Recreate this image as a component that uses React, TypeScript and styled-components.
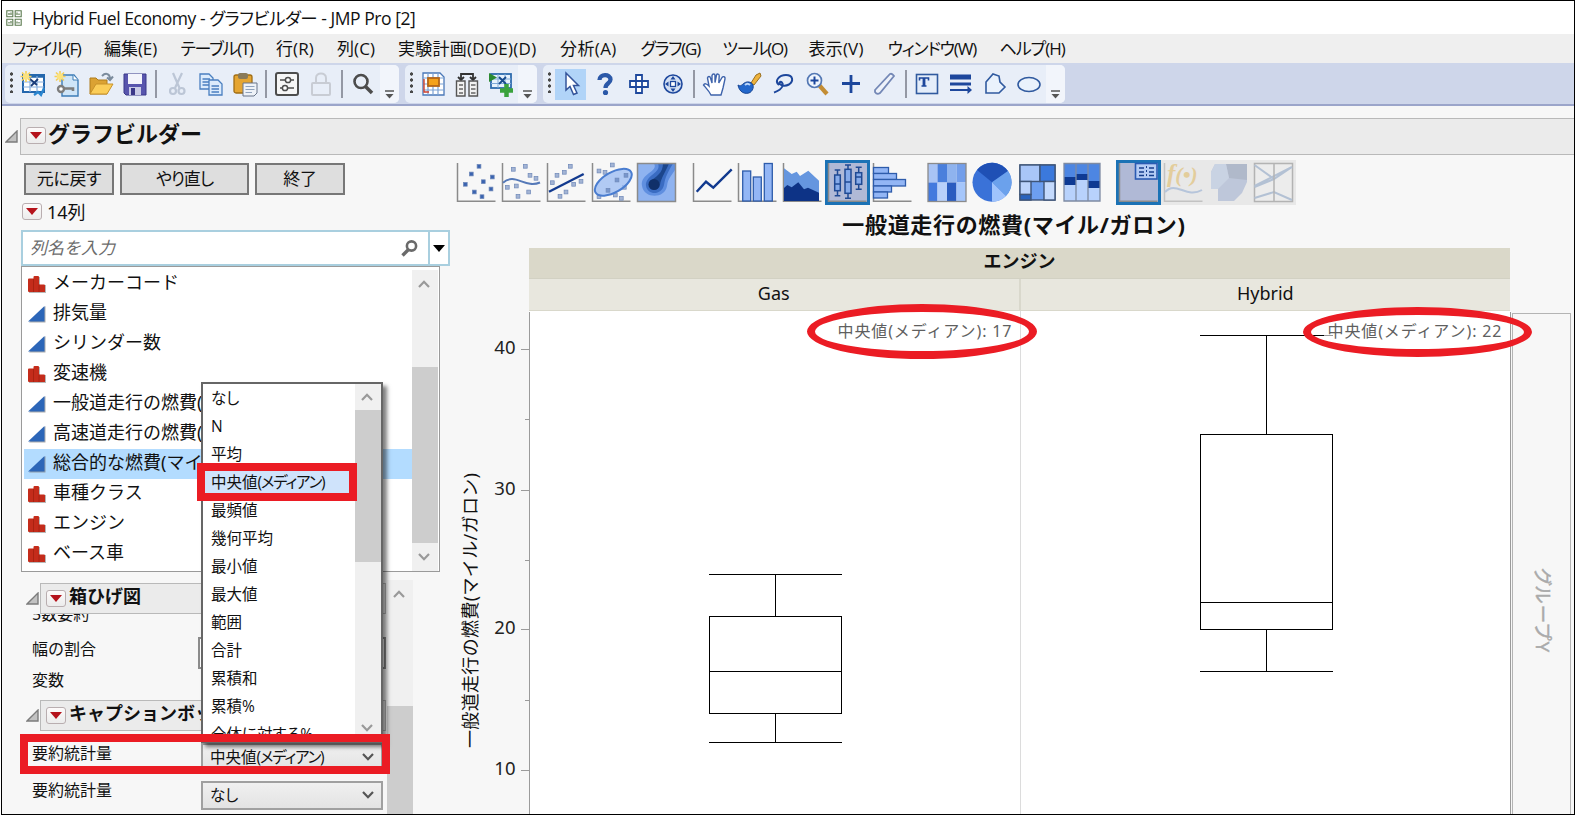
import React from "react";
import styled, { createGlobalStyle, css } from "styled-components";

const jp = `"Noto Sans", "Noto Sans CJK JP", sans-serif`;
const ui = `"Open Sans", "Noto Sans CJK JP", sans-serif`;
const RED = "#eb1c24";

const GlobalStyle = createGlobalStyle`
  * { box-sizing: border-box; }
  body { margin: 0; background: #fff; color: #111; font-family: ${jp}; overflow: hidden; }
  svg { display: block; flex: none; }
`;

const Page = styled.div`
  position: relative;
  width: 1575px;
  height: 815px;
  padding-left: 1px;
  overflow: hidden;
`;
const Frame = styled.div`
  height: 815px;
  border: 1px solid #000;
  display: flex;
  flex-direction: column;
  background: #f7f7f7;
  overflow: hidden;
`;

/* Window chrome */
const TitleBar = styled.header`
  height: 33px;
  flex: none;
  display: flex;
  align-items: center;
  gap: 10px;
  padding: 0 0 0 4px;
  background: #fff;
`;
const WindowTitle = styled.span`
  font: 17.5px/32px ${ui};
  font-feature-settings: "palt";
  letter-spacing: -0.46px;
  white-space: nowrap;
`;
const MenuBar = styled.nav`
  height: 29px;
  flex: none;
  display: flex;
  padding-left: 10px;
  background: #efefef;
`;
const MenuItem = styled.span<{ $w: number; $ls?: number }>`
  width: ${(p) => p.$w}px;
  flex: none;
  font: 17px/30px ${ui};
  font-feature-settings: "palt";
  letter-spacing: ${(p) => p.$ls ?? -0.5}px;
  white-space: nowrap;
`;
const ToolBar = styled.div`
  height: 43px;
  flex: none;
  display: flex;
  gap: 6px;
  padding: 2px 0 0 3px;
  background: #ced6ea;
  border-bottom: 2px solid #9ba5ca;
`;
const ToolGroup = styled.div`
  height: 38px;
  display: flex;
  align-items: center;
  border-radius: 5px;
  background: #e8eef8;
  overflow: hidden;
`;
const Grip = styled.span`
  width: 11px;
  height: 22px;
  margin-bottom: 4px;
  background: radial-gradient(circle, #4a4a4a 1.4px, transparent 1.9px) 0 0 / 13px 6px repeat-y;
`;
const ToolButton = styled.span<{ $active?: boolean }>`
  width: 34px;
  height: 38px;
  display: flex;
  align-items: center;
  justify-content: center;
  ${(p) => p.$active && css`
    height: 31px;
    width: 31px;
    margin: 0 2px 0 1px;
    background: #b1d4f8;
  `}
`;
const Divider = styled.span`
  width: 2px;
  height: 28px;
  margin: 0 3px;
  background: #9498a4;
`;
const Overflow = styled.span`
  width: 19px;
  height: 38px;
  padding: 25px 0 0 5px;
  background: #f2f5fb;
`;

/* Report outline */
const OutlineRow = styled.div`
  display: flex;
  flex: none;
  align-items: center;
  gap: 2px;
  margin-top: 12px;
  padding-left: 3px;
`;
const OutlineTitle = styled.div`
  flex: 1;
  height: 37px;
  display: flex;
  align-items: center;
  gap: 2px;
  padding: 0 0 2px 5px;
  background: #ebebeb;
  border: 1px solid #b9b9b9;
  border-right: 0;
  font: bold 22px/30px ${jp};
  span:last-child { margin-top: -6px; }
`;
const RedMenu = styled.span`
  width: 20px;
  height: 17px;
  flex: none;
  display: flex;
  align-items: center;
  justify-content: center;
  border: 1px solid #b9aeb0;
  border-radius: 3px;
  background: linear-gradient(#fdfafa, #ececec);
`;
const Body = styled.div`
  flex: 1;
  min-height: 0;
  display: flex;
`;

/* Left control panel */
const Controls = styled.aside`
  width: 450px;
  flex: none;
  display: flex;
  flex-direction: column;
  padding: 8px 0 0 19px;
`;
const ButtonRow = styled.div`
  display: flex;
  gap: 6px;
  padding-left: 3px;
`;
const PushButton = styled.button<{ $w: number; $ls?: number }>`
  width: ${(p) => p.$w}px;
  height: 32px;
  padding: 0;
  border: 2px solid #777;
  background: #dedede;
  color: #111;
  font: 17px/24px ${jp};
  font-feature-settings: "palt";
  letter-spacing: ${(p) => p.$ls ?? -0.3}px;
`;
const CountRow = styled.div`
  height: 35px;
  display: flex;
  align-items: center;
  gap: 5px;
  padding: 0 0 2px 1px;
  font: 18px/24px ${jp};
`;
const SearchBox = styled.div`
  width: 429px;
  height: 36px;
  flex: none;
  display: flex;
  border: 2px solid #a9cfdf;
  background: #fff;
`;
const SearchField = styled.div`
  flex: 1;
  display: flex;
  align-items: center;
  justify-content: space-between;
  padding: 0 10px 0 7px;
  border-right: 2px solid #a9cfdf;
  color: #6c6c6c;
  font: italic 17px/30px ${jp};
`;
const SearchArrow = styled.div`
  width: 18px;
  display: flex;
  align-items: center;
  justify-content: center;
`;
const ListBox = styled.div`
  width: 419px;
  height: 306px;
  flex: none;
  display: flex;
  padding: 2px 1px 0 2px;
  border: 1px solid #9a9a9a;
  background: #fff;
`;
const ListRows = styled.div`
  flex: 1;
`;
const ListRow = styled.div<{ $selected?: boolean }>`
  height: 30px;
  display: flex;
  align-items: center;
  gap: 7px;
  padding-left: 4px;
  font: 18px/28px ${jp};
  background: ${(p) => (p.$selected ? "#b3dcff" : "transparent")};
  span { margin-top: -4px; white-space: nowrap; }
`;
const ScrollTrack = styled.div<{ $top?: number }>`
  width: 26px;
  flex: none;
  display: flex;
  flex-direction: column;
  align-items: center;
  margin-top: ${(p) => p.$top ?? 0}px;
  background: #f0f0f0;
`;
const ScrollCap = styled.div<{ $h?: number }>`
  height: ${(p) => p.$h ?? 28}px;
  flex: none;
  display: flex;
  align-items: center;
  padding-right: 2px;
`;
const ScrollThumb = styled.div<{ $gap: number; $h: number }>`
  width: 26px;
  height: ${(p) => p.$h}px;
  margin-top: ${(p) => p.$gap}px;
  background: #cdcdcd;
`;
const Spacer = styled.div`
  flex: 1;
`;
const OptionsPane = styled.div`
  flex: 1;
  min-height: 0;
  width: 392px;
  display: flex;
  gap: 1px;
  overflow: hidden;
`;
const OptionsColumn = styled.div`
  width: 365px;
  padding: 11px 0 0 5px;
`;
const SectionRow = styled.div<{ $top?: number }>`
  display: flex;
  align-items: center;
  gap: 1px;
  width: 360px;
  margin-top: ${(p) => p.$top ?? 0}px;
`;
const SectionTitle = styled.div`
  flex: 1;
  height: 31px;
  display: flex;
  align-items: center;
  gap: 3px;
  padding-left: 5px;
  border: 1px solid #b9b9b9;
  background: #ebebeb;
  font: bold 18px/24px ${jp};
  white-space: nowrap;
  span:last-child { margin-top: -5px; }
`;
const ClippedLabel = styled.div`
  height: 10px;
  padding-left: 6px;
  display: flex;
  align-items: flex-end;
  overflow: hidden;
  font: 16px/19px ${jp};
`;
const Field = styled.div<{ $top: number; $h: number; $lift?: number }>`
  display: flex;
  align-items: center;
  height: ${(p) => p.$h}px;
  margin-top: ${(p) => p.$top}px;
  padding-left: 6px;
  > span {
    width: 169px;
    font: 16px/22px ${jp};
    margin-top: -${(p) => p.$lift ?? 6}px;
  }
`;
const TextInput = styled.div`
  width: 188px;
  height: 32px;
  margin-left: -3px;
  border: 2px solid #8c8c8c;
  background: #fff;
`;
const Combo = styled.div`
  width: 182px;
  height: 29px;
  display: flex;
  align-items: center;
  padding: 0 7px 2px 7px;
  border: 2px solid #a0a0a0;
  background: linear-gradient(#f0f0f0, #e3e3e3);
  font: 15.5px/24px ${ui};
  font-feature-settings: "palt";
  svg { margin-left: auto; }
`;
/* Half-width style setting used for the katakana part of a statistic name */
const Narrow = styled.span`
  letter-spacing: -1.25px;
`;

/* Statistic drop-down, floating above the panel */
const Popup = styled.div`
  position: absolute;
  left: 201px;
  top: 382px;
  width: 182px;
  height: 361px;
  display: flex;
  border: 2px solid #666;
  border-bottom-width: 1px;
  background: #fff;
  box-shadow: 4px 4px 4px rgba(0, 0, 0, 0.5);
`;
const PopupItems = styled.div`
  flex: 1;
  overflow: hidden;
`;
const PopupItem = styled.div<{ $active?: boolean }>`
  height: 28px;
  padding-left: 8px;
  font: 15.5px/29px ${ui};
  font-feature-settings: "palt";
  white-space: nowrap;
  background: ${(p) => (p.$active ? "#cfe3fb" : "transparent")};
`;
const Mark = styled.div<{ $x: number; $y: number; $w: number; $h: number; $round?: boolean }>`
  position: absolute;
  left: ${(p) => p.$x}px;
  top: ${(p) => p.$y}px;
  width: ${(p) => p.$w}px;
  height: ${(p) => p.$h}px;
  border: 8px solid ${RED};
  border-radius: ${(p) => (p.$round ? "50%" : "0")};
`;

/* Graph area */
const Graph = styled.main`
  flex: 1;
  min-width: 0;
  display: flex;
  flex-direction: column;
`;
const Palette = styled.div`
  display: flex;
  gap: 10.6px;
  padding: 5px 0 0 2px;
  height: 50px;
  flex: none;
`;
const PaletteGroup = styled.div`
  display: flex;
`;
const ChartType = styled.div<{ $state?: "on" | "off" }>`
  width: 45px;
  height: 45px;
  background: ${(p) => (p.$state === "on" ? "#b0b9d6" : p.$state === "off" ? "#e8e8e8" : "transparent")};
  box-shadow: ${(p) => (p.$state === "on" ? "inset 0 0 0 3px #1b72b5" : "none")};
  svg { opacity: ${(p) => (p.$state === "off" ? 0.4 : 1)}; }
`;
const GraphTitle = styled.h1`
  margin: 0;
  height: 43px;
  width: 1124px;
  text-align: center;
  font: bold 22px/39px ${jp};
  letter-spacing: 0.66px;
`;
const PlotArea = styled.div`
  flex: 1;
  min-height: 0;
  display: flex;
`;
const PlotColumn = styled.div`
  width: 1060px;
  flex: none;
`;
const GroupHeader = styled.div`
  margin-left: 77px;
  width: 981px;
  height: 31px;
  background: #dad8c9;
  border-bottom: 1px solid #d2d1c3;
  text-align: center;
  font: bold 18px/27px ${jp};
`;
const LevelHeader = styled.div`
  margin-left: 77px;
  width: 981px;
  height: 32px;
  display: flex;
  background: #e8e7de;
  border-bottom: 1px solid #d9d8cb;
`;
const Level = styled.div`
  flex: 1;
  text-align: center;
  font: 18px/29px ${jp};
  & + & { border-left: 2px solid #d9d8cc; }
`;
const GroupYZone = styled.div`
  width: 59px;
  margin-top: 65px;
  display: flex;
  align-items: flex-start;
  justify-content: center;
  padding: 254px 0 0 3px;
  border: 1px solid #b4b4b4;
  border-width: 1px 1px 0 1px;
  color: #aaa;
  font: 18.5px/24px ${ui};
  font-feature-settings: "palt";
  -webkit-text-stroke: 0.5px #aaa;
  span { writing-mode: vertical-rl; text-orientation: sideways; letter-spacing: 1.4px; }
`;

/* Icons */
const Tri = ({ w = 12, h = 7, c = "#b5121b" }: { w?: number; h?: number; c?: string }) => (
  <svg width={w} height={h} viewBox="0 0 12 7"><path d="M0 0H12L6 7Z" fill={c} /></svg>
);
const Chevron = ({ up, c = "#999" }: { up?: boolean; c?: string }) => (
  <svg width="12" height="8" viewBox="0 0 12 8">
    <path d={up ? "M1 7L6 1.8L11 7" : "M1 1L6 6.2L11 1"} fill="none" stroke={c} strokeWidth="2.2" />
  </svg>
);
const Disclosure = () => (
  <svg width="13" height="13" viewBox="0 0 13 13">
    <path d="M12 1V12H1Z" fill="#c2c2c2" stroke="#7c7c7c" strokeWidth="1.4" />
  </svg>
);
const Continuous = () => (
  <svg width="18" height="18" viewBox="0 0 18 18">
    <path d="M17.5 1V17.5H1Z" fill="#777" opacity=".6" /><path d="M16.5 1V16.5H0Z" fill="#2c66b8" />
  </svg>
);
const Nominal = () => (
  <svg width="18" height="18" viewBox="0 0 18 18">
    <path d="M1 5H6V2H12V10H18V18H1Z" fill="#888" opacity=".6" />
    <path d="M0 4.500Q0 3.500 1 3.500H5.500V2Q5.500 1 6.500 1H10Q11 1 11 2V9.500H16Q17 9.500 17 10.500V17H1Q0 17 0 16Z" fill="#c42c1b" />
    <path d="M5.5 4V17M11 9.500V17" stroke="#a3200f" strokeWidth=".8" />
  </svg>
);
const Lens = () => (
  <svg width="17" height="17" viewBox="0 0 17 17" fill="none" stroke="#6a6a6a">
    <circle cx="10.5" cy="6" r="4.6" strokeWidth="2.6" /><path d="M7 10L1.5 15.5" strokeWidth="3.4" />
  </svg>
);
const AppIcon = () => (
  <svg width="16" height="16" viewBox="0 0 16 16" fill="none" stroke="#5c7b50">
    <path d="M.8.8H6.8V6.8H.8ZM9.2.8H15.2V6.8H9.2ZM.8 9.2H6.8V15.2H.8ZM9.2 9.2H15.2V15.2H9.2Z" strokeWidth="1.1" />
    <path d="M3 5V3M5 5V2.5M11 5V2.5M13 5V3.5M3 13.5V12M5 13.5V11M11 13.5V11.5M13 13.5V12" strokeWidth="1.2" />
  </svg>
);
const B = "#1d479c";
const sun = (
  <g stroke="#f4cf58" strokeWidth="1.6">
    <path d="M6 0V11M.5 5.5H11.5M2 1.5L10 9.5M10 1.5L2 9.5" /><circle cx="6" cy="5.5" r="3.2" fill="#fbe27e" stroke="none" />
  </g>
);
const toolIcons: Record<string, React.ReactNode> = {
  newTable: <>
    <rect x="3" y="4" width="21" height="17" fill="#fff" stroke="#2467ad" strokeWidth="2" />
    <path d="M3 5.5H24" stroke="#2467ad" strokeWidth="2.4" />
    <path d="M10 5V21M17 5V21M3 11H24M3 16H24" stroke="#86aede" strokeWidth="1.2" />
    <path d="M10 8L17 14M11 15L18 8" stroke="#1b3d7a" strokeWidth="1.8" /><path d="M14 24L18 21L21 24L24 17" stroke="#2a86d0" strokeWidth="2.2" fill="none" />{sun}
  </>,
  newScript: <>
    <path d="M8 4H20L24 9V25H8Z" fill="#cfe5f8" stroke="#3d7cb6" strokeWidth="1.4" /><path d="M19 4V9H24" fill="#fff" stroke="#3d7cb6" />
    <circle cx="7" cy="18" r="3" fill="#fff" stroke="#7d7d7d" strokeWidth="2.4" /><path d="M10 17.5H19V20" stroke="#7d7d7d" strokeWidth="2.6" fill="none" />{sun}
  </>,
  open: <>
    <path d="M2 23V7H8L10 9H19V23Z" fill="#dba233" stroke="#b07c1c" /><path d="M2 23L8 13H25L19 23Z" fill="#fbcd58" stroke="#c8922a" />
    <path d="M14 5C18 1 22 3 22 8M19 6.500L22 9L25 5.5" fill="none" stroke="#7b8b9c" strokeWidth="2" />
  </>,
  save: <>
    <path d="M2 3H24V24H4L2 22Z" fill="#5855ad" stroke="#3b3889" /><rect x="6" y="3" width="14" height="10" fill="#f3f4fb" />
    <rect x="7" y="16" width="12" height="8" fill="#c9cbe6" /><rect x="9" y="17" width="4" height="7" fill="#3b3889" />
  </>,
  cut: <g fill="none" stroke="#bcc6d6" strokeWidth="2.2">
    <path d="M9 2L15.500 17M18 2L11 17" /><circle cx="9" cy="20" r="3" /><circle cx="17.500" cy="20" r="3" />
  </g>,
  copy: <g fill="#dcebfc" stroke="#4a7fc0" strokeWidth="1.3">
    <path d="M2 3H11L15 7V18H2Z" /><path d="M4.500 8H12M4.500 11H12M4.500 14H12" />
    <path d="M11 9H20L24 13V24H11Z" /><path d="M13.500 15H21M13.500 18H21M13.500 21H21" />
  </g>,
  paste: <>
    <rect x="2" y="4" width="18" height="18" rx="2" fill="#e5a532" stroke="#a06d14" strokeWidth="1.3" /><rect x="6" y="2" width="10" height="6" rx="2" fill="#8a7a58" />
    <path d="M11 12H25V22L22 25H11Z" fill="#eef2f8" stroke="#68758a" /><path d="M13.500 15.500H22.500M13.500 18.500H22.500M13.500 21.500H20" stroke="#8fa2bd" />
  </>,
  prefs: <g fill="none" stroke="#4d4d4d" strokeWidth="1.5">
    <rect x="2" y="2" width="22" height="22" rx="2" fill="#f6f6f6" strokeWidth="2" /><path d="M6 9H20M6 17H20" strokeWidth="1.4" />
    <circle cx="14" cy="9" r="2.6" fill="#fff" /><circle cx="11" cy="17" r="2.6" fill="#fff" />
  </g>,
  lock: <g fill="none" stroke="#c8ccd4" strokeWidth="2"><rect x="4" y="12" width="18" height="12" rx="1" /><path d="M8 12V7C8 1 18 1 18 7V12" /></g>,
  find: <g fill="none" stroke="#4c4c4c"><circle cx="11" cy="10.500" r="6.500" strokeWidth="2.6" /><path d="M15.500 15.500L22 22" strokeWidth="3.600" /></g>,
  grid: <>
    <path d="M3 2H20L24 6V24H3Z" fill="#fff" stroke="#4a78b8" strokeWidth="1.3" />
    <path d="M8 2V24M13 2V24M18 2V24M3 7H24M3 13H24M3 19H24" stroke="#7ba1d3" strokeWidth="1.2" />
    <rect x="8" y="7" width="11" height="8" fill="#f5a21b" stroke="#b4651a" strokeWidth="1.800" /><path d="M4 8V21H9" fill="none" stroke="#d0402c" strokeWidth="1.4" />
  </>,
  join: <>
    <path d="M7 8V3H19V8M4 6L7 9L10 6M16 6L19 9L22 6" fill="none" stroke="#333" strokeWidth="1.800" />
    <path d="M2.500 10H11V25H2.500ZM15 10H23.500V25H15Z" fill="#f2f2f2" stroke="#555" strokeWidth="1.4" />
    <path d="M5 14H9M5 18H9M5 22H9M17 14H21.500M17 18H21.500M17 22H21.500" stroke="#666" strokeWidth="1.6" />
  </>,
  addRows: <>
    <rect x="3" y="3" width="20" height="14" fill="#e7f2fd" stroke="#2e6bad" strokeWidth="1.8" /><path d="M10 3V17M17 3V17M3 8H23M3 12.500H23" stroke="#7fa9d8" />
    <path d="M1 2L9 6.500L1 11Z" fill="#2b8a32" /><path d="M11 6L18 13M18 6L11 13" stroke="#174a8c" strokeWidth="1.800" />
    <path d="M18.500 13V26M12 19.500H25" stroke="#3aa23c" strokeWidth="4.500" />
  </>,
  arrow: <path d="M8 2V19L12 15.500L15.500 23.500L19 22L15.500 14.500H20.500Z" fill="#fff" stroke="#34549a" strokeWidth="1.5" />,
  help: <g fill="none" stroke="#2b58a8"><path d="M7.500 9C7.500 2.500 18.500 2.500 18.500 8.500C18.500 12.500 13.500 12 13.500 17" strokeWidth="4.300" /><circle cx="13.500" cy="21.500" r="1.3" strokeWidth="2.600" /></g>,
  cross: <path d="M10 4H16V10H22V16H16V22H10V16H4V10H10Z M10 10H16V16H10Z" fill="#fff" stroke={B} strokeWidth="1.800" />,
  target: <g stroke={B} fill="none"><circle cx="13" cy="13" r="9" strokeWidth="1.6" fill="#d4e0f3" /><rect x="10.500" y="10.500" width="5" height="5" fill="#fff" strokeWidth="1.3" />
    <path d="M13 5L15.500 8.500H10.500ZM13 21L15.500 17.500H10.500ZM5 13L8.500 10.500V15.500ZM21 13L17.500 10.500V15.500Z" fill={B} stroke="none" /></g>,
  hand: <path d="M9 24C7 20 4 17 1.500 14C2.500 12 4.500 12.500 7 15L5.500 7C6 5 8 5 8.500 7L10 12V4.500C10.500 2.500 13 2.500 13 4.500V11.500L14.500 4C15 2.500 17.500 2.800 17.200 5L16.800 12L20 6.500C21 5 23.500 5.500 23 7.800L21 17L19 24Z" fill="#fff" stroke="#3e63ab" strokeWidth="1.4" />,
  brush: <><path d="M15 12L20 4L24 2L25 5L18 14Z" fill="#edb23c" stroke="#9b7020" /><path d="M2 14C6 17 7 10 13 11C19 12 18 19 14 21.500C9 24 3 21 2 14Z" fill="#2267cc" stroke="#174594" /><path d="M9 14C11 12 13 13 14 14" stroke="#bcd6fa" strokeWidth="2" fill="none" /></>,
  lasso: <g fill="none" stroke={B} strokeWidth="2"><path d="M9 14C4 10 9 4 16 4C23 4 24 10 19 13.500C14 16 9 14 9.500 11.500C11 10 13.500 12 12.500 15C11 19 8 20 4 21.500" /></g>,
  zoom: <><path d="M15 14L23 23" stroke="#c38d35" strokeWidth="4.200" /><circle cx="10.500" cy="9.500" r="7" fill="#eff5fd" stroke="#5478b4" strokeWidth="1.700" /><path d="M10.500 5.500V13.500M6.500 9.500H14.500" stroke={B} strokeWidth="2" /></>,
  plus: <path d="M13 4V22M4 12.500H22" stroke={B} strokeWidth="2.800" />,
  ruler: <path d="M3 19L18 3Q20 2 22 5L8 22Q5 24 3 21Z" fill="#eef2fa" stroke="#7488b6" strokeWidth="1.8" />,
  text: <><rect x="2.500" y="3.500" width="21" height="19" fill="#e4edfa" stroke="#305a9f" strokeWidth="1.6" /><path d="M5.500 9.500V7H14.500V9.500" fill="none" stroke={B} strokeWidth="1.600" /><path d="M10 7V15" stroke={B} strokeWidth="2.800" /><path d="M7.500 15H12.500" stroke={B} strokeWidth="1.400" /></>,
  lines: <g stroke={B}><path d="M2 6H23" strokeWidth="5" /><path d="M2 13H23" strokeWidth="2.800" /><path d="M2 19H21" strokeWidth="1.800" /><path d="M19.500 15L24 19L19.500 23Z" fill={B} stroke="none" /></g>,
  poly: <path d="M4 11L11 3L17 5L18 11L23 16L17 22H4Z" fill="#eaf2fc" stroke="#305a9f" strokeWidth="1.6" />,
  oval: <ellipse cx="13" cy="13.500" rx="11" ry="7" fill="#eaf2fc" stroke="#305a9f" strokeWidth="1.6" />,
};

const Tool = ({ name }: { name: string }) => (
  <ToolButton $active={name === "arrow"}>
    <svg width="26" height="26" viewBox="0 0 26 26">{toolIcons[name]}</svg>
  </ToolButton>
);
const ToolSet = ({ groups }: { groups: string[][] }) => (
  <ToolGroup>
    <Grip />
    {groups.map((g, i) => (
      <React.Fragment key={i}>
        {i > 0 && <Divider />}
        {g.map((n) => <Tool key={n} name={n} />)}
      </React.Fragment>
    ))}
    <Overflow>
      <svg width="9" height="9" viewBox="0 0 9 9"><path d="M0 1H9" stroke="#555" strokeWidth="1.5" /><path d="M.5 4H8.500L4.500 8.500Z" fill="#555" /></svg>
    </Overflow>
  </ToolGroup>
);

/* Chart type pictures */
const axes = <path d="M3.500 3V41.200H41.500" fill="none" stroke="#8b8b8b" strokeWidth="1.500" />;
const dots = (pts: number[][], c = "#a3b4d4") => pts.map(([x, y], i) => (
  <rect key={i} x={x - 1.900} y={y - 1.900} width="3.800" height="3.800" fill={c} stroke="#6f89b8" strokeWidth=".7" />
));
const box = (x: number, w: number, t: number, b: number, lo: number, hi: number, m: number) => (
  <g stroke="#1f4a94" strokeWidth="1.500" fill="#86abea">
    <path d={`M${x + w / 2} ${lo}V${hi}M${x} ${lo}H${x + w}M${x} ${hi}H${x + w}`} />
    <rect x={x} y={t} width={w} height={b - t} /><path d={`M${x} ${m}H${x + w}`} />
  </g>
);
const chartIcons: Record<string, React.ReactNode> = {
  points: <>{axes}{dots([[25, 6.3], [17.3, 14], [38.3, 17], [29.3, 21.7], [11.3, 24.3], [37, 29], [20.3, 32], [28, 36.7]], "#3a63b0")}</>,
  smoother: <>{axes}{dots([[14.3, 9.3], [26.3, 6.3], [31, 15.3], [37, 18.3], [8.3, 27.3], [17.3, 26], [19, 36.3], [29.7, 32]])}
    <path d="M4 22.700C16 12 26 29 41 22.500" fill="none" stroke="#5579b8" strokeWidth="2" /></>,
  fit: <>{axes}{dots([[26.3, 6.3], [20.3, 12.3], [13, 15.3], [8.3, 22.7], [29.7, 24.3], [37, 21.3], [22, 32], [16, 36.3]])}
    <path d="M5 31.700L39.700 14" stroke="#123a8f" strokeWidth="2.400" /></>,
  ellipse: <>{axes}{dots([[23.3, 5], [10, 11], [16, 12.3], [10, 36.7], [26.3, 35], [32.3, 38.3], [35.3, 27.3]])}
    <ellipse cx="24.300" cy="22.300" rx="20.500" ry="10" transform="rotate(-30 24.300 22.300)" fill="#9fbef3" fillOpacity=".8" stroke="#4a7dd0" strokeWidth="2" />
    {dots([[37, 15.3], [28, 20], [19, 30.3]], "#7896cc")}</>,
  contour: <><rect x="3.500" y="3.500" width="38" height="38" fill="#8fb3f0" />
    <path d="M20 3.500C25 12 6 13 8 26C10 39 31 39 33 26C34 18 38 15 41 10V3.500Z" fill="#5f8fe0" />
    <path d="M24 3.500C28 13 11 15 12 26C14 36 28 35 30 25C31 17 34 12 39 3.500Z" fill="#3a6cc2" />
    <path d="M29 3.500C29 13 22 17 16 21C14 31 25 32 26 25C27 18 32 11 35 3.500Z" fill="#1c468c" /><circle cx="20" cy="24.500" r="5.500" fill="#103069" />
    <rect x="3.500" y="3.500" width="38" height="38" fill="none" stroke="#8b8b8b" strokeWidth="1.500" /></>,
  line: <>{axes}<path d="M6.700 31.700L16 21.700L23.300 27.700L41.700 9.300" fill="none" stroke="#123a8f" strokeWidth="2.400" /></>,
  bar: <>{axes}<g fill="#93b6f5" stroke="#2e5cab" strokeWidth="1.300"><rect x="7.700" y="11" width="8" height="30" /><rect x="18.300" y="17" width="8" height="24" /><rect x="29.300" y="3.500" width="8" height="37.500" /></g></>,
  area: <>{axes}<path d="M4 8.300L11.700 14L16.700 11.700L20 16L28.300 10.700L39 20.700V41H4Z" fill="#6596df" /><path d="M4 28L7.300 25L11.700 27.300L18.300 22.300L24 29.300L28 27.700L39 32.700V41H4Z" fill="#0d3386" /></>,
  box: <>{axes}{box(9.7, 5.6, 15, 30.7, 10, 35.700, 24)}{box(20, 6, 9.300, 33.300, 5, 38.300, 22)}{box(30.700, 6, 12.700, 24.300, 7.300, 29.300, 17)}</>,
  hist: <>{axes}<g fill="#93b6f5" stroke="#2e5cab" strokeWidth="1.300"><rect x="3.500" y="7.500" width="15" height="6" /><rect x="3.500" y="13.500" width="23" height="6" /><rect x="3.500" y="19.500" width="32" height="6.500" /><rect x="3.500" y="26" width="18" height="6" /><rect x="3.500" y="32" width="14" height="6" /></g></>,
  heat: <>{["#a9c4f5", "#4a7fdc", "#8fb3ee", "#739eea"].map((c, i) => <rect key={c} x={3 + i * 9.500} y="3.500" width="9.500" height="19" fill={c} />)}
    {["#447ade", "#b8d0fa", "#2a5cc0", "#a5c6fb"].map((c, i) => <rect key={c} x={3 + i * 9.500} y="22.500" width="9.500" height="18.500" fill={c} />)}
    <rect x="3" y="3.500" width="38" height="38" fill="none" stroke="#8b8b8b" strokeWidth="1.300" /></>,
  pie: <><circle cx="22" cy="22.300" r="19.500" fill="#3a72d8" /><path d="M22 22.300L7 10A19.500 19.500 0 0 1 38 11Z" fill="#1f50b5" /><path d="M22 22.300L38 11A19.500 19.500 0 0 1 36 36Z" fill="#6ba1ec" /><path d="M22 22.300L36 36A19.500 19.500 0 0 1 22 41.800Z" fill="#9fc3fc" /></>,
  tree: <g stroke="#3f5578" strokeWidth="1.400"><rect x="5" y="5" width="35" height="35" fill="#6d9ff0" /><rect x="5" y="5" width="20" height="16.500" fill="#a9c6f8" /><rect x="25" y="5" width="15" height="16.500" fill="#3b79dc" /><rect x="5" y="21.500" width="11" height="13" fill="#bcd3fb" /><rect x="5" y="34.500" width="11" height="5.500" fill="#2a63bd" /><rect x="29" y="21.500" width="11" height="18.500" fill="#c4dafd" /></g>,
  mosaic: <><rect x="4" y="3.500" width="36" height="37.500" fill="#b8d2fc" /><path d="M4 3.500H16V18H4ZM16 3.500H28V14H16ZM28 3.500H40V21H28Z" fill="#4d86e2" /><path d="M4 17H16V25H4ZM16 14H28V20H16ZM28 21H40V28H28Z" fill="#0e3a93" /><path d="M4 3.500H40V41H4ZM16 3.500V41M28 3.500V41" fill="none" stroke="#7e8ba3" strokeWidth="1.300" /></>,
  caption: <>{axes}<rect x="19.500" y="3.500" width="21.500" height="15.500" fill="#b4cbf4" stroke="#2a5bb3" strokeWidth="1.600" /><path d="M23 8H28M23 12H28M23 15.500H28M33 8H38M33 12H38M33 15.500H38" stroke="#173f8c" strokeWidth="1.400" /><path d="M30.500 6V17" stroke="#173f8c" strokeDasharray="2 2" /></>,
  formula: <>{axes}<text x="6" y="22" fontFamily="Liberation Serif" fontStyle="italic" fontWeight="bold" fontSize="25" fill="#dca62b">f<tspan fontSize="22">(•)</tspan></text><path d="M4 32C15 20 25 39 41 30" fill="none" stroke="#6d92c8" strokeWidth="2" /></>,
  map: <><path d="M5 12L9 4H41V22L36 33L28 41H12V29H5Z" fill="#8098c6" /><path d="M20 4H41V20L23 18Z" fill="#5f749e" /><path d="M5 12L9 4H20L23 18L12 29H5Z" fill="#9db4dc" /></>,
  parallel: <g fill="none"><rect x="3.500" y="3.500" width="38" height="38" fill="#f3f3f3" stroke="#666" strokeWidth="1.500" /><path d="M3.500 5L23 19L41 7M3.500 26L41 7M3.500 38L23 32L41 40M3.500 27L23 19" stroke="#6688b8" strokeWidth="2" /><path d="M23 3.500V41" stroke="#666" strokeWidth="1.500" /></g>,
};
const palette: { name: string; state?: "on" | "off" }[][] = [
  [{ name: "points" }, { name: "smoother" }, { name: "fit" }, { name: "ellipse" }, { name: "contour" }],
  [{ name: "line" }, { name: "bar" }, { name: "area" }, { name: "box", state: "on" }, { name: "hist" }],
  [{ name: "heat" }, { name: "pie" }, { name: "tree" }, { name: "mosaic" }],
  [{ name: "caption", state: "on" }, { name: "formula", state: "off" }, { name: "map", state: "off" }, { name: "parallel", state: "off" }],
];

const menus: [string, number, number][] = [
  ["ファイル(F)", 92, -1.3], ["編集(E)", 76.5, -0.05], ["テーブル(T)", 95.5, -1.3], ["行(R)", 61, 0.1], ["列(C)", 61, 0.1],
  ["実験計画(DOE)(D)", 162, 0.25], ["分析(A)", 80.5, 0.4], ["グラフ(G)", 82, -1.2], ["ツール(O)", 86, -1.2],
  ["表示(V)", 79, 0.2], ["ウィンドウ(W)", 112, -1.2], ["ヘルプ(H)", 80, -1],
];
const columns: [string, boolean][] = [
  ["メーカーコード", true], ["排気量", false], ["シリンダー数", false], ["変速機", true], ["一般道走行の燃費(マイル/ガロン)", false],
  ["高速道走行の燃費(マイル/ガロン)", false], ["総合的な燃費(マイル/ガロン)", false], ["車種クラス", true], ["エンジン", true], ["ベース車", true],
];
const median = <>中央値<Narrow>(メディアン)</Narrow></>;
const stats: React.ReactNode[] = ["なし", "N", "平均", median, "最頻値", "幾何平均", "最小値", "最大値", "範囲", "合計", "累積和", "累積%", "全体に対する%"];

/* Axis ticks and box plot quantiles, in plot pixels */
const ticks: [number, number][] = [[40, 349], [35, 419], [30, 490], [25, 560], [20, 629], [15, 700], [10, 770]];
const plots = [
  { cx: 775.5, x: 709.5, min: 742.5, q1: 713.5, med: 671.5, q3: 616.5, max: 574.5 },
  { cx: 1266.5, x: 1200.5, min: 671.5, q1: 629.5, med: 602.5, q3: 434.5, max: 335.5 },
];
const Plot = () => (
  <svg width="1060" height="503" viewBox="452 311 1060 503" fontFamily={jp}>
    <rect x="529" y="311" width="982" height="503" fill="#fff" />
    <path d="M1020.500 311V814" stroke="#dcdcdc" />
    <path d="M529.500 312V814M1510.500 312V814" stroke="#9b9b9b" />
    {ticks.map(([v, y]) => (
      <g key={v}>
        <path d={`M${v % 10 ? 525 : 521} ${y + 0.5}H529`} stroke="#9b9b9b" />
        {v % 10 === 0 && <text x="515.500" y={y + 5} textAnchor="end" fontSize="18.500" fill="#222">{v}</text>}
      </g>
    ))}
    <text transform="translate(477 748) rotate(-90)" fontSize="18" fill="#111" textLength="275">一般道走行の燃費(マイル/ガロン)</text>
    {plots.map((b) => (
      <g key={b.cx} fill="none" stroke="#000">
        <path d={`M${b.x - 0.5} ${b.max}H${b.x + 132.5}M${b.cx} ${b.max}V${b.q3}M${b.cx} ${b.q1}V${b.min}M${b.x - 0.5} ${b.min}H${b.x + 132.5}`} />
        <rect x={b.x} y={b.q3} width="132" height={b.q1 - b.q3} />
        <path d={`M${b.x} ${b.med}H${b.x + 132}`} />
      </g>
    ))}
    <rect x="1324" y="320" width="180" height="22" fill="#fff" opacity=".6" />
    <text x="837.500" y="336.500" fontSize="16" fill="#5f5f5f" textLength="174">中央値(メディアン): 17</text>
    <text x="1327.500" y="336.500" fontSize="16" fill="#5f5f5f" textLength="174">中央値(メディアン): 22</text>
  </svg>
);

export default function App() {
  return (
    <Page>
      <GlobalStyle />
      <Frame>
        <TitleBar><AppIcon /><WindowTitle>Hybrid Fuel Economy - グラフビルダー - JMP Pro [2]</WindowTitle></TitleBar>
        <MenuBar>{menus.map(([t, w, ls]) => <MenuItem key={t} $w={w} $ls={ls}>{t}</MenuItem>)}</MenuBar>
        <ToolBar>
          <ToolSet groups={[["newTable", "newScript", "open", "save"], ["cut", "copy", "paste"], ["prefs", "lock"], ["find"]]} />
          <ToolSet groups={[["grid", "join", "addRows"]]} />
          <ToolSet groups={[["arrow", "help", "cross", "target"], ["hand", "brush", "lasso", "zoom", "plus", "ruler"], ["text", "lines", "poly", "oval"]]} />
        </ToolBar>
        <OutlineRow>
          <Disclosure />
          <OutlineTitle><RedMenu><Tri /></RedMenu><span>グラフビルダー</span></OutlineTitle>
        </OutlineRow>
        <Body>
          <Controls>
            <ButtonRow>
              <PushButton $w={90}>元に戻す</PushButton><PushButton $w={129} $ls={-1.1}>やり直し</PushButton><PushButton $w={90}>終了</PushButton>
            </ButtonRow>
            <CountRow><RedMenu><Tri /></RedMenu><span>14列</span></CountRow>
            <SearchBox>
              <SearchField><span>列名を入力</span><Lens /></SearchField>
              <SearchArrow><Tri c="#000" /></SearchArrow>
            </SearchBox>
            <ListBox>
              <ListRows>
                {columns.map(([t, nominal], i) => (
                  <ListRow key={t} $selected={i === 6}>{nominal ? <Nominal /> : <Continuous />}<span>{t}</span></ListRow>
                ))}
              </ListRows>
              <ScrollTrack $top={1}>
                <ScrollCap><Chevron up /></ScrollCap><ScrollThumb $gap={69} $h={178} /><ScrollCap><Chevron /></ScrollCap>
              </ScrollTrack>
            </ListBox>
            <OptionsPane>
              <OptionsColumn>
                <SectionRow><Disclosure /><SectionTitle><RedMenu><Tri /></RedMenu><span>箱ひげ図</span></SectionTitle></SectionRow>
                <ClippedLabel>5数要約</ClippedLabel>
                <Field $top={13} $h={32} $lift={9}><span>幅の割合</span><TextInput /></Field>
                <Field $top={2} $h={25} $lift={7}><span>変数</span></Field>
                <SectionRow $top={4}><Disclosure /><SectionTitle><RedMenu><Tri /></RedMenu><span>キャプションボックス</span></SectionTitle></SectionRow>
                <Field $top={12} $h={29} $lift={10}><span>要約統計量</span><Combo>{median}<Chevron c="#555" /></Combo></Field>
                <Field $top={9} $h={29} $lift={12}><span>要約統計量</span><Combo>なし<Chevron c="#555" /></Combo></Field>
              </OptionsColumn>
              <ScrollTrack $top={8}>
                <ScrollCap><Chevron up /></ScrollCap><ScrollThumb $gap={98} $h={110} />
              </ScrollTrack>
            </OptionsPane>
          </Controls>
          <Graph>
            <Palette>
              {palette.map((g, i) => (
                <PaletteGroup key={i}>
                  {g.map((c) => (
                    <ChartType key={c.name} $state={c.state}><svg width="45" height="45" viewBox="0 0 45 45">{chartIcons[c.name]}</svg></ChartType>
                  ))}
                </PaletteGroup>
              ))}
            </Palette>
            <GraphTitle>一般道走行の燃費(マイル/ガロン)</GraphTitle>
            <PlotArea>
              <PlotColumn>
                <GroupHeader>エンジン</GroupHeader>
                <LevelHeader><Level>Gas</Level><Level>Hybrid</Level></LevelHeader>
                <Plot />
              </PlotColumn>
              <GroupYZone><span>グループY</span></GroupYZone>
            </PlotArea>
          </Graph>
        </Body>
      </Frame>
      <Popup>
        <PopupItems>{stats.map((s, i) => <PopupItem key={i} $active={i === 3}>{s}</PopupItem>)}</PopupItems>
        <ScrollTrack>
          <ScrollCap $h={26}><Chevron up /></ScrollCap><ScrollThumb $gap={0} $h={152} /><Spacer /><ScrollCap><Chevron /></ScrollCap>
        </ScrollTrack>
      </Popup>
      <Mark $x={197} $y={463} $w={160} $h={38} />
      <Mark $x={20} $y={734} $w={370} $h={40} />
      <Mark $x={807} $y={304} $w={230} $h={55} $round />
      <Mark $x={1303} $y={307} $w={229} $h={50} $round />
    </Page>
  );
}
